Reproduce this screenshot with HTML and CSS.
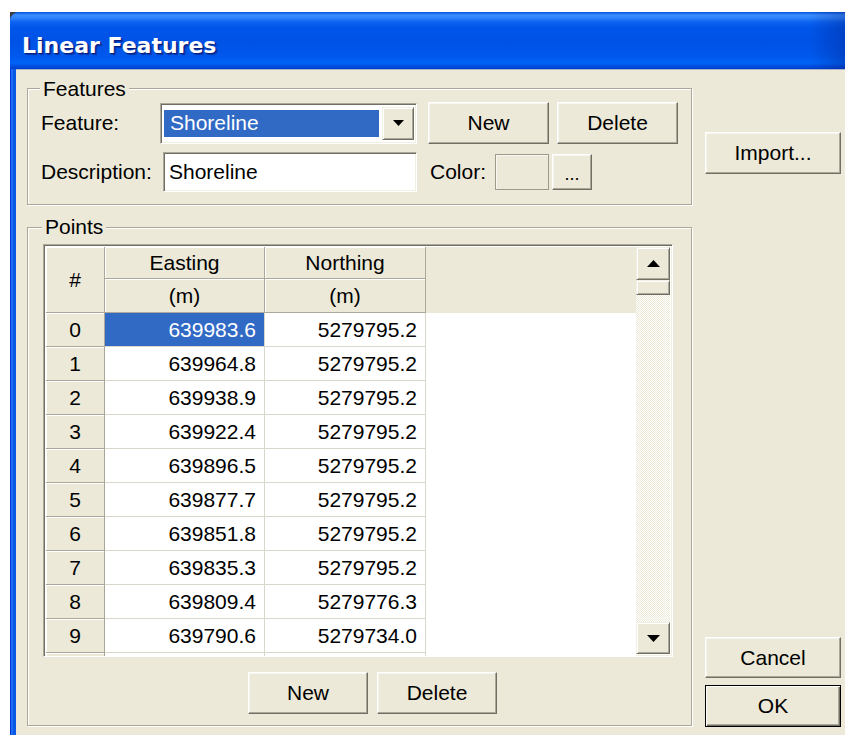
FILE: index.html
```html
<!DOCTYPE html>
<html>
<head>
<meta charset="utf-8">
<title>Linear Features</title>
<link rel="stylesheet" href="styles.css">
</head>
<body>
<div class="window">
  <div class="frame">
    <div class="titlebar"><span class="title">Linear Features</span></div>
    <div class="client">
      <div class="main">
        <div class="group features">
          <span class="legend">Features</span>
          <div class="row row-feature">
            <span class="label lbl-feature">Feature:</span>
            <div class="combo sunken">
              <div class="combo-value">Shoreline</div>
              <div class="combo-btn raised">
                <svg width="11" height="6" viewBox="0 0 11 6"><polygon points="0,0 11,0 5.5,6" fill="#000"/></svg>
              </div>
            </div>
            <button class="btn btn-new">New</button>
            <button class="btn btn-delete">Delete</button>
          </div>
          <div class="row row-desc">
            <span class="label lbl-desc">Description:</span>
            <div class="textbox sunken">Shoreline</div>
            <span class="label lbl-color">Color:</span>
            <div class="swatch"></div>
            <button class="btn btn-dots">...</button>
          </div>
        </div>

        <div class="group points">
          <span class="legend">Points</span>
          <div class="grid sunken">
            <div class="sheet">
              <div class="hc corner">#</div>
              <div class="hc">Easting</div>
              <div class="hc">Northing</div>
              <div class="hc blank"></div>
              <div class="hc">(m)</div>
              <div class="hc">(m)</div>

              <div class="rh">0</div><div class="cell selected">639983.6</div><div class="cell">5279795.2</div><div class="fill"></div>
              <div class="rh">1</div><div class="cell">639964.8</div><div class="cell">5279795.2</div><div class="fill"></div>
              <div class="rh">2</div><div class="cell">639938.9</div><div class="cell">5279795.2</div><div class="fill"></div>
              <div class="rh">3</div><div class="cell">639922.4</div><div class="cell">5279795.2</div><div class="fill"></div>
              <div class="rh">4</div><div class="cell">639896.5</div><div class="cell">5279795.2</div><div class="fill"></div>
              <div class="rh">5</div><div class="cell">639877.7</div><div class="cell">5279795.2</div><div class="fill"></div>
              <div class="rh">6</div><div class="cell">639851.8</div><div class="cell">5279795.2</div><div class="fill"></div>
              <div class="rh">7</div><div class="cell">639835.3</div><div class="cell">5279795.2</div><div class="fill"></div>
              <div class="rh">8</div><div class="cell">639809.4</div><div class="cell">5279776.3</div><div class="fill"></div>
              <div class="rh">9</div><div class="cell">639790.6</div><div class="cell">5279734.0</div><div class="fill"></div>
              <div class="rh"></div><div class="cell"></div><div class="cell"></div><div class="fill"></div>
            </div>
            <div class="vscroll">
              <div class="sb-btn raised">
                <svg width="13" height="7" viewBox="0 0 13 7"><polygon points="6.5,0 13,7 0,7" fill="#000"/></svg>
              </div>
              <div class="sb-thumb raised"></div>
              <div class="sb-track"></div>
              <div class="sb-btn raised">
                <svg width="13" height="7" viewBox="0 0 13 7"><polygon points="0,0 13,0 6.5,7" fill="#000"/></svg>
              </div>
            </div>
          </div>
          <div class="grid-actions">
            <button class="btn">New</button>
            <button class="btn">Delete</button>
          </div>
        </div>
      </div>

      <div class="side">
        <button class="btn btn-side">Import...</button>
        <button class="btn btn-side btn-cancel">Cancel</button>
        <button class="btn btn-side btn-ok">OK</button>
      </div>
    </div>
  </div>
</div>
</body>
</html>
```

FILE: styles.css
```css
* { box-sizing: border-box; }

html, body {
  margin: 0;
  padding: 0;
  background: #fff;
}

body {
  font-family: "Liberation Sans", Arial, sans-serif;
  font-size: 21px;
  color: #000;
}

/* ---------- window chrome ---------- */
.window {
  margin: 12px 0 0 10px;
  width: 835px;
  height: 723px;
  background: #3c3c3c;
}

.frame {
  height: 100%;
  display: flex;
  flex-direction: column;
  border-radius: 9px 0 0 0;
  overflow: hidden;
  background: linear-gradient(90deg, #0831d9 0 1px, #1a6cf2 1px 3px, #0858e6 3px 6px);
}

.titlebar {
  flex: none;
  height: 57px;
  display: flex;
  align-items: center;
  padding: 9px 0 0 12px;
  background:
    linear-gradient(90deg, rgba(0, 0, 0, 0) 800px, rgba(0, 20, 110, 0.28) 835px),
    linear-gradient(180deg,
      #0450da 0px, #3b8cff 3px, #2e83fa 6px, #0c62f0 10px, #0055e8 16px,
      #0052e6 30px, #0058ec 44px, #0063f8 51px, #0050e0 54px, #003fcc 57px);
}

.title {
  font-family: "DejaVu Sans", sans-serif;
  font-weight: bold;
  font-size: 22px;
  color: #fff;
  text-shadow: 1px 1px 0 #0a1e80, 2px 2px 1px rgba(0, 20, 100, 0.5);
}

.client {
  flex: 1;
  margin-left: 6px;
  display: flex;
  background: #ece9d8;
  border-top: 1px solid #a9b3c9;
}

.main {
  width: 676px;
  padding: 18px 0 0 11px;
}

.side {
  width: 136px;
  margin-left: 13px;
  display: flex;
  flex-direction: column;
  padding: 62px 0 8px;
}

/* ---------- common widgets ---------- */
.group {
  position: relative;
  width: 665px;
  border: 1px solid #aca899;
  box-shadow: inset 1px 1px 0 #fff, 1px 1px 0 #fff;
}

.legend {
  position: absolute;
  left: 12px;
  top: -12px;
  padding: 0 3px;
  line-height: 24px;
  background: #ece9d8;
}

.btn {
  font: inherit;
  color: #000;
  padding: 0;
  margin: 0;
  display: flex;
  align-items: center;
  justify-content: center;
  background: #ece9d8;
  border: 1px solid;
  border-color: #fff #716f64 #716f64 #fff;
  box-shadow: inset -1px -1px 0 #aca899, inset 1px 1px 0 #f6f5ee;
  border-radius: 0;
}

.raised {
  background: #ece9d8;
  border: 1px solid;
  border-color: #f1efe2 #716f64 #716f64 #f1efe2;
  box-shadow: inset 1px 1px 0 #fff, inset -1px -1px 0 #aca899;
}

.sunken {
  border: 1px solid;
  border-color: #aca899 #fff #fff #aca899;
  box-shadow: inset 1px 1px 0 #716f64, inset -1px -1px 0 #f1efe2;
}

.row {
  display: flex;
  align-items: center;
}

/* ---------- features group ---------- */
.features {
  height: 117px;
  padding: 13px 0 0 13px;
}

.row-feature { height: 42px; }
.row-desc { height: 40px; margin-top: 8px; }

.lbl-feature { width: 119px; }
.lbl-desc { width: 122px; }
.lbl-color { width: 65px; margin-left: 13px; }

.combo {
  width: 257px;
  height: 41px;
  display: flex;
  background: #fff;
  padding: 2px;
}

.combo-value {
  flex: 1;
  margin: 4px 3px 4px 1px;
  padding-left: 6px;
  display: flex;
  align-items: center;
  background: #316ac5;
  color: #fff;
}

.combo-btn {
  width: 32px;
  margin: 1px 0;
  display: flex;
  align-items: center;
  justify-content: center;
}

.btn-new { width: 121px; height: 42px; margin-left: 11px; }
.btn-delete { width: 121px; height: 42px; margin-left: 8px; }

.textbox {
  width: 254px;
  height: 40px;
  padding-left: 5px;
  display: flex;
  align-items: center;
  background: #fff;
}

.swatch {
  width: 54px;
  height: 36px;
  border: 1px solid #9d9a8c;
  box-shadow: inset 1px 1px 0 #f8f7f2;
  background: #ece9d8;
}

.btn-dots {
  width: 40px;
  height: 36px;
  margin-left: 3px;
  font-size: 18px;
  padding-top: 4px;
}

/* ---------- points group ---------- */
.points {
  height: 499px;
  margin-top: 22px;
  padding: 16px 0 0 15px;
}

.points .legend {
  left: 14px;
  top: -13px;
}

.grid {
  width: 630px;
  height: 413px;
  padding: 2px;
  display: flex;
  background: #fff;
}

.sheet {
  width: 592px;
  height: 409px;
  overflow: hidden;
  display: grid;
  grid-template-columns: 59px 160px 161px 212px;
  grid-template-rows: 32px 34px;
  grid-auto-rows: 34px;
  background: #fff;
}

.hc, .rh {
  display: flex;
  align-items: center;
  justify-content: center;
  background: #ece9d8;
  border-right: 1px solid #aca899;
  border-bottom: 1px solid #aca899;
  box-shadow: inset 1px 1px 0 #fff;
}

.corner { grid-row: span 2; }

.hc.blank {
  grid-row: span 2;
  border: 0;
  box-shadow: none;
}

.cell {
  display: flex;
  align-items: center;
  justify-content: flex-end;
  padding-right: 8px;
  border-right: 1px solid #d9d6cb;
  border-bottom: 1px solid #d9d6cb;
  background: #fff;
}

.cell.selected {
  background: #316ac5;
  color: #fff;
}

.fill { background: #fff; }

.vscroll {
  width: 34px;
  display: flex;
  flex-direction: column;
}

.sb-btn {
  height: 33px;
  display: flex;
  align-items: center;
  justify-content: center;
}

.sb-btn:last-child { height: 32px; }

.sb-thumb { height: 15px; }

.sb-track {
  flex: 1;
  background-color: #fff;
  background-image: repeating-conic-gradient(#ece9d8 0 25%, #fff 0 50%);
  background-size: 2px 2px;
}

.grid-actions {
  display: flex;
  margin: 15px 0 0 205px;
}

.grid-actions .btn {
  width: 120px;
  height: 42px;
  margin-right: 9px;
}

/* ---------- dialog buttons ---------- */
.btn-side {
  width: 136px;
  height: 42px;
}

.btn-cancel {
  margin-top: auto;
  height: 41px;
}

.btn-ok {
  margin-top: 7px;
  border: 1px solid #000;
  box-shadow: inset 1px 1px 0 #fff, inset -1px -1px 0 #716f64, inset -2px -2px 0 #aca899;
}
```
